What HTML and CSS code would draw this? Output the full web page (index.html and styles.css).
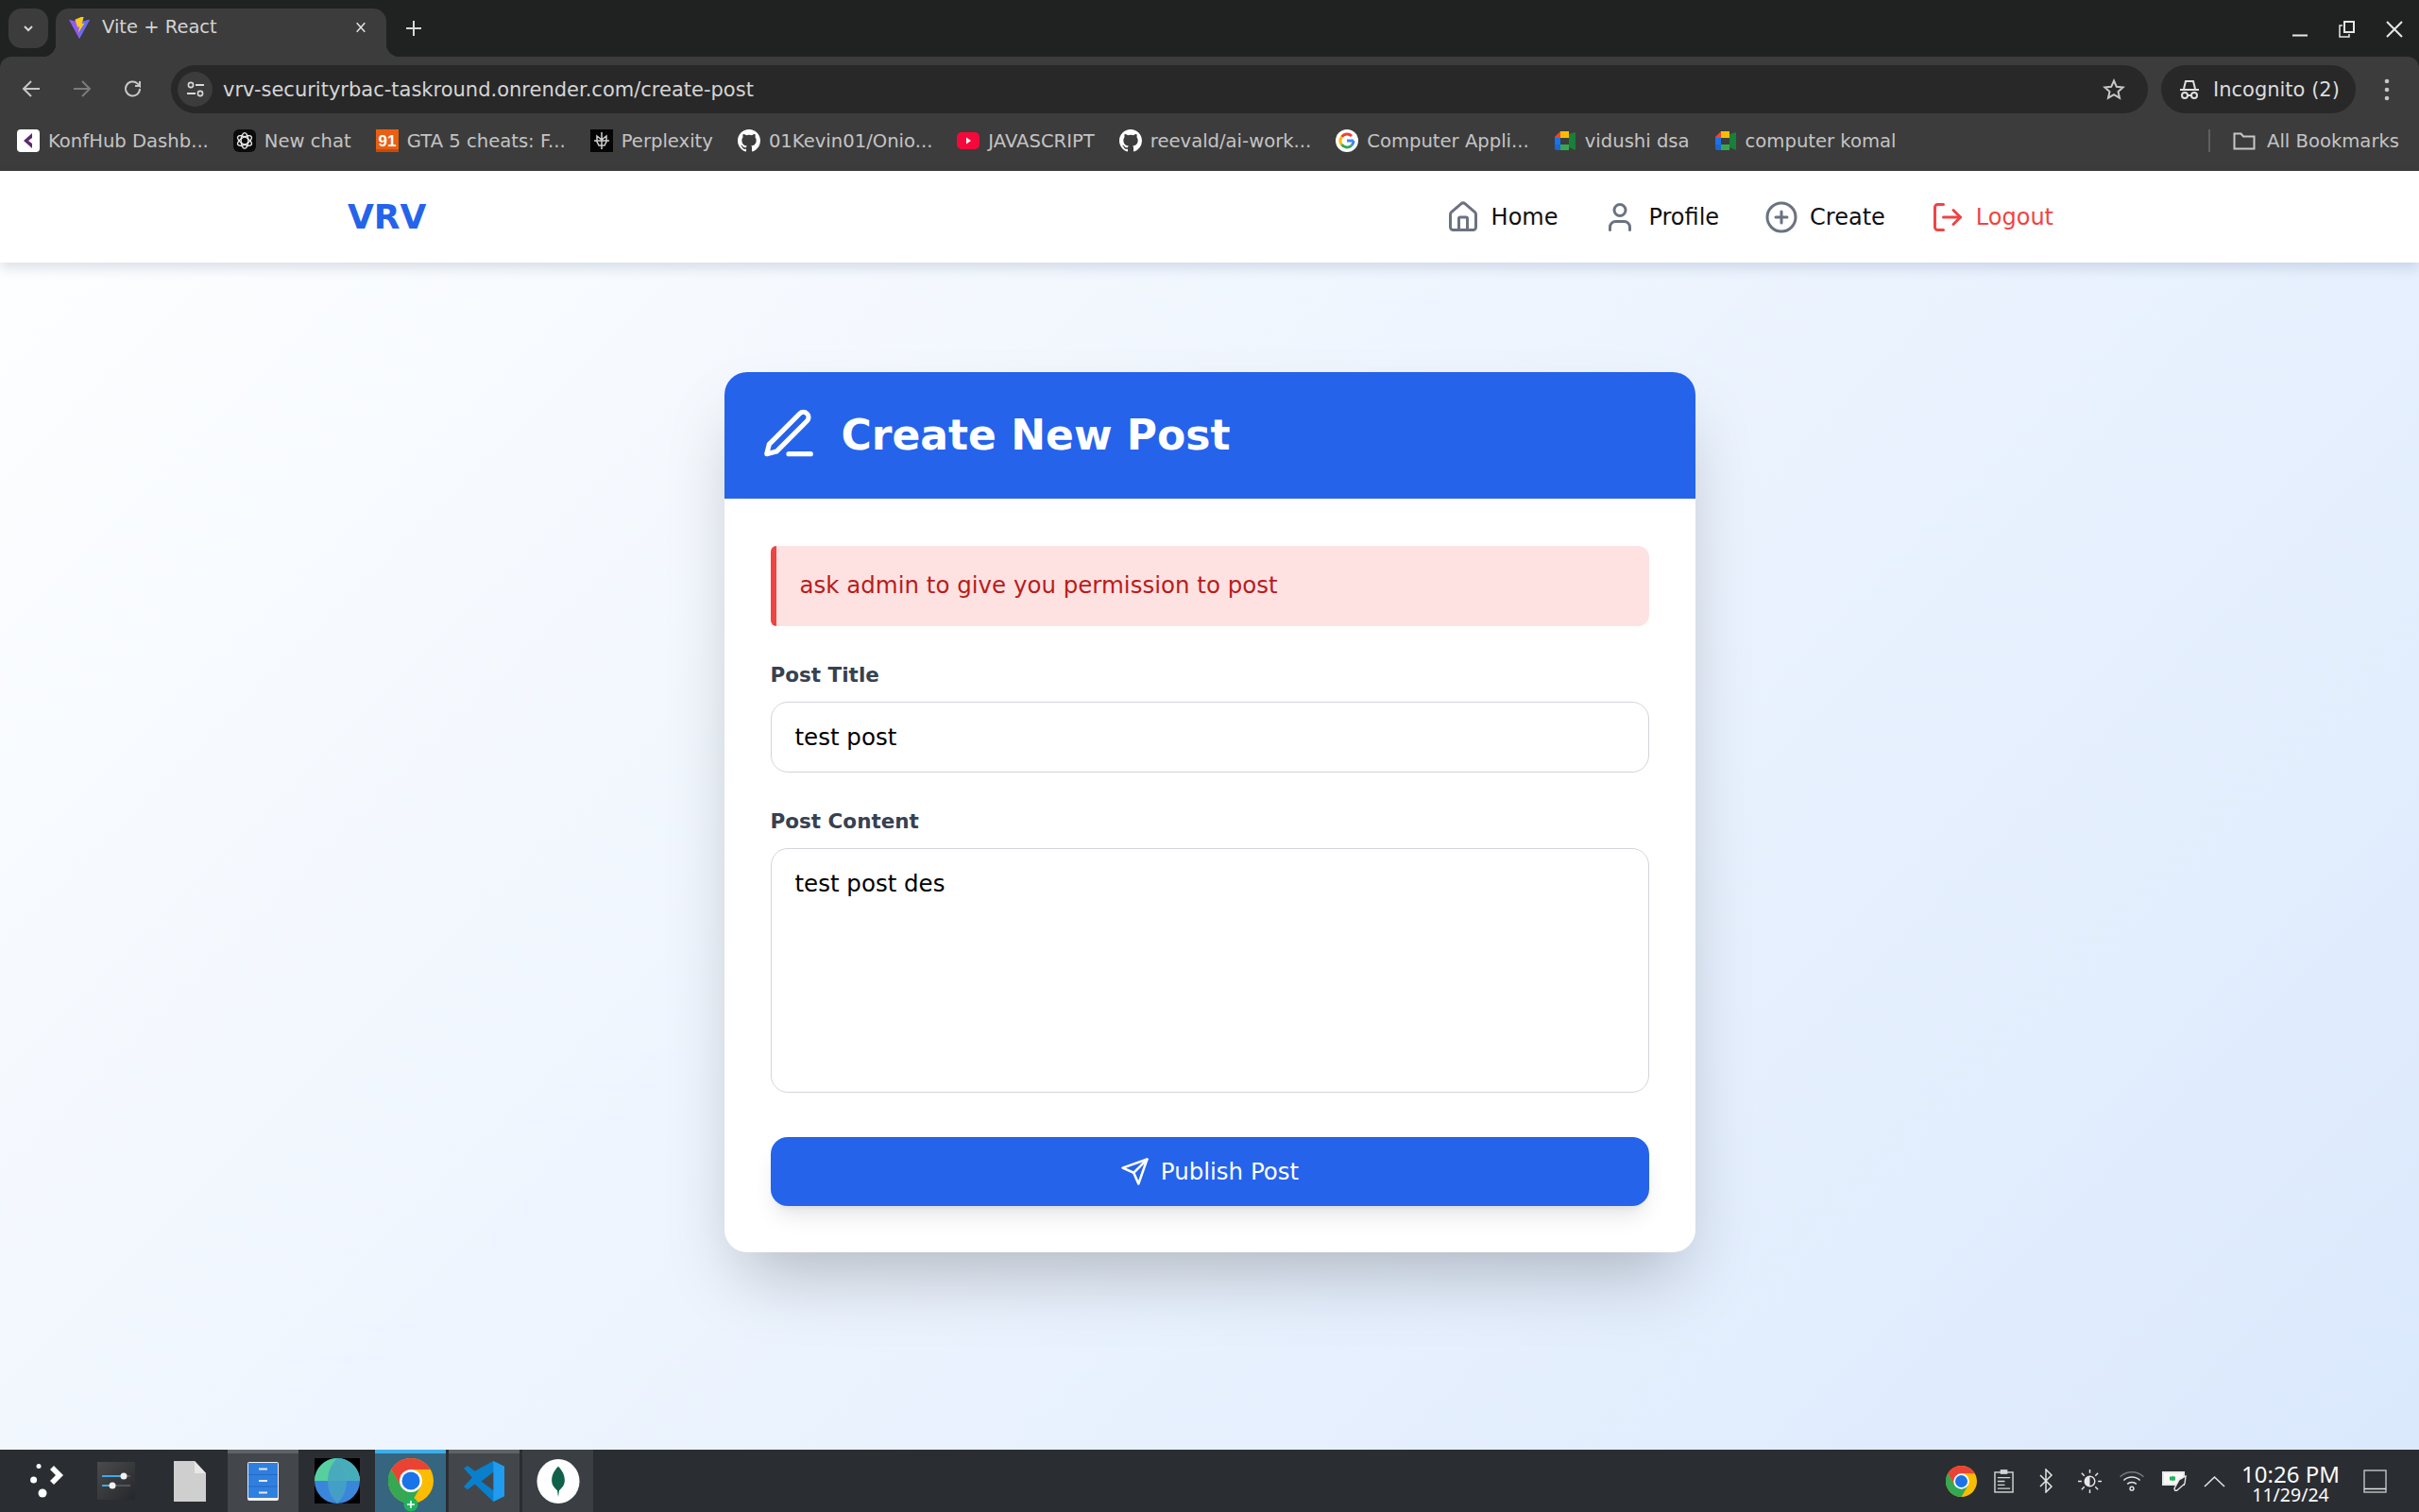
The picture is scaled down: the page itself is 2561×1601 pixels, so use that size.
FILE: index.html
```html
<!DOCTYPE html>
<html lang="en">
<head>
  <meta charset="UTF-8" />
  <title>Vite + React</title>
  <link rel="stylesheet" href="styles.css">
</head>
<body>
  <!-- browser chrome -->
  <div class="tabstrip">
    <div class="tab-search"><svg width="14" height="14" viewBox="0 0 14 14"><path d="M3 5l4 4 4-4" fill="none" stroke="#d5d7d8" stroke-width="2"/></svg></div>
    <div class="tab">
      <svg class="tab-favicon" width="24" height="24" viewBox="0 0 26 26">
        <path d="M1 4l12 3 12-3-12 22z" fill="#8f5cf6"/>
        <path d="M13 7l12-3-12 22z" fill="#6a6cf0"/>
        <path d="M15 1L8 4l3 9 2-1-1 7 7-11-3 1 2-8z" fill="#fdc91e"/>
      </svg>
      <span class="tab-title">Vite + React</span>
      <svg class="tab-close" width="12" height="12" viewBox="0 0 14 14"><path d="M2 1.5l10 11M12 1.5l-10 11" stroke="#e3e3e3" stroke-width="1.8"/></svg>
    </div>
    <svg class="new-tab" width="16" height="16" viewBox="0 0 16 16"><path d="M8 0v16M0 8h16" stroke="#d8d8d8" stroke-width="2"/></svg>
    <div class="win-controls">
      <svg width="18" height="18" viewBox="0 0 18 18"><path d="M1 15.5h16" stroke="#e6e6e6" stroke-width="2"/></svg>
      <svg width="18" height="18" viewBox="0 0 18 18"><path d="M4 5H1v12h10v-3" fill="none" stroke="#e6e6e6" stroke-width="1.5"/><rect x="6" y="1" width="10" height="11" fill="none" stroke="#e6e6e6" stroke-width="2"/></svg>
      <svg width="18" height="18" viewBox="0 0 18 18"><path d="M1 1l16 16M17 1L1 17" stroke="#e6e6e6" stroke-width="2"/></svg>
    </div>
  </div>

  <div class="toolbar">
    <svg class="tool-icon" width="20" height="20" viewBox="0 0 20 20"><path d="M19 10H2M10 2l-8 8 8 8" fill="none" stroke="#c7c7c7" stroke-width="2"/></svg>
    <svg class="tool-icon" width="20" height="20" viewBox="0 0 20 20"><path d="M1 10h17M10 2l8 8-8 8" fill="none" stroke="#7c7c7c" stroke-width="2"/></svg>
    <svg class="tool-icon" width="20" height="20" viewBox="0 0 20 20"><path d="M17 10a7.5 7.5 0 1 1-2.300-5.400L17 7V2M17 7h-5" fill="none" stroke="#c7c7c7" stroke-width="2"/></svg>
    <div class="omnibox">
      <div class="site-info">
        <svg width="22" height="22" viewBox="0 0 22 22"><circle cx="6" cy="6" r="2.6" fill="none" stroke="#d8d8d8" stroke-width="1.6"/><path d="M11 6h9M2 15h9" stroke="#d8d8d8" stroke-width="1.8"/><circle cx="16" cy="15" r="2.6" fill="none" stroke="#d8d8d8" stroke-width="1.6"/></svg>
      </div>
      <span class="url">vrv-securityrbac-taskround.onrender.com/create-post</span>
      <svg class="star" width="24" height="24" viewBox="0 0 24 24"><path d="M12 2.500l2.800 6.300 6.800.7-5.100 4.500 1.500 6.700L12 17.200l-6 3.500 1.500-6.700-5.100-4.500 6.800-.7z" fill="none" stroke="#c7c7c7" stroke-width="2"/></svg>
    </div>
    <div class="incognito">
      <svg width="24" height="24" viewBox="0 0 24 24"><path d="M2 12h20M6 11l2-8h8l2 8" fill="none" stroke="#e0e0e0" stroke-width="2"/><circle cx="7" cy="18" r="3" fill="none" stroke="#e0e0e0" stroke-width="2"/><circle cx="17" cy="18" r="3" fill="none" stroke="#e0e0e0" stroke-width="2"/><path d="M10 18h4" stroke="#e0e0e0" stroke-width="2"/></svg>
      <span>Incognito (2)</span>
    </div>
    <svg class="kebab" width="6" height="24" viewBox="0 0 6 24"><circle cx="3" cy="3" r="2.3" fill="#c7c7c7"/><circle cx="3" cy="12" r="2.3" fill="#c7c7c7"/><circle cx="3" cy="21" r="2.3" fill="#c7c7c7"/></svg>
  </div>

  <div class="bookmarks">
    <a class="bm">
      <svg width="24" height="24" viewBox="0 0 24 24"><rect width="24" height="24" rx="4" fill="#fff"/><path d="M16 4l-9 8 9 8v-5l-4-3 4-3z" fill="#5b2a6e"/></svg>
      <span>KonfHub Dashb...</span>
    </a>
    <a class="bm">
      <svg width="24" height="24" viewBox="0 0 24 24"><rect width="24" height="24" rx="6" fill="#0b0b0b"/><g fill="none" stroke="#ececec" stroke-width="1.3"><ellipse cx="12" cy="12" rx="3.800" ry="8.300"/><ellipse cx="12" cy="12" rx="3.800" ry="8.300" transform="rotate(60 12 12)"/><ellipse cx="12" cy="12" rx="3.800" ry="8.300" transform="rotate(120 12 12)"/></g></svg>
      <span>New chat</span>
    </a>
    <a class="bm">
      <svg width="24" height="24" viewBox="0 0 24 24"><rect width="24" height="24" fill="#ea5f12"/><rect y="21" width="24" height="3" fill="#c84b06"/><text class="fav-num" x="12" y="18" text-anchor="middle">91</text></svg>
      <span>GTA 5 cheats: F...</span>
    </a>
    <a class="bm">
      <svg width="24" height="24" viewBox="0 0 24 24"><rect width="24" height="24" fill="#050505"/><path d="M7 7l5 4 5-4v6l-2 4H9l-2-4zM12 3v18M4 12h16" fill="none" stroke="#cfcfcf" stroke-width="1.5"/></svg>
      <span>Perplexity</span>
    </a>
    <a class="bm">
      <svg class="gh" width="24" height="24" viewBox="0 0 16 16"><path fill="#fff" d="M8 0C3.580 0 0 3.580 0 8c0 3.540 2.290 6.530 5.470 7.590.4.070.55-.170.55-.380v-1.340c-2.230.490-2.690-1.070-2.690-1.070-.360-.930-.890-1.170-.890-1.170-.730-.500.060-.490.060-.490.800.060 1.230.820 1.230.820.710 1.220 1.870.870 2.330.660.070-.520.280-.870.500-1.070-1.780-.200-3.640-.890-3.640-3.950 0-.870.310-1.590.820-2.150-.080-.200-.360-1.020.080-2.120 0 0 .670-.210 2.200.820a7.700 7.700 0 0 1 4 0c1.530-1.040 2.200-.820 2.200-.820.440 1.100.160 1.920.080 2.120.510.560.820 1.270.820 2.150 0 3.070-1.870 3.750-3.650 3.950.290.250.540.730.540 1.480v2.190c0 .210.150.460.550.380A8 8 0 0 0 16 8c0-4.420-3.580-8-8-8z"/></svg>
      <span>01Kevin01/Onio...</span>
    </a>
    <a class="bm">
      <svg width="24" height="24" viewBox="0 0 24 24"><rect y="3" width="24" height="18" rx="5" fill="#f5093b"/><path d="M10 8.500l5 3.500-5 3.500z" fill="#fff"/></svg>
      <span>JAVASCRIPT</span>
    </a>
    <a class="bm">
      <svg class="gh" width="24" height="24" viewBox="0 0 16 16"><path fill="#fff" d="M8 0C3.580 0 0 3.580 0 8c0 3.540 2.290 6.530 5.470 7.590.4.070.55-.170.55-.380v-1.340c-2.230.490-2.690-1.070-2.690-1.070-.360-.930-.890-1.170-.890-1.170-.730-.500.060-.490.060-.490.800.060 1.230.820 1.230.820.710 1.220 1.870.870 2.330.660.070-.520.280-.870.500-1.070-1.780-.200-3.640-.890-3.640-3.950 0-.870.310-1.590.820-2.150-.080-.200-.360-1.020.080-2.120 0 0 .670-.210 2.200.820a7.700 7.700 0 0 1 4 0c1.530-1.040 2.200-.820 2.200-.820.440 1.100.160 1.920.080 2.120.510.560.820 1.270.820 2.150 0 3.070-1.870 3.750-3.650 3.950.290.250.540.730.540 1.480v2.190c0 .210.150.460.550.380A8 8 0 0 0 16 8c0-4.420-3.580-8-8-8z"/></svg>
      <span>reevald/ai-work...</span>
    </a>
    <a class="bm">
      <svg width="24" height="24" viewBox="0 0 24 24"><circle cx="12" cy="12" r="12" fill="#fff"/><path d="M19 12h-7" stroke="#4285f4" stroke-width="3"/><path d="M17 7a7 7 0 0 0-10.500.8" fill="none" stroke="#ea4335" stroke-width="3"/><path d="M6.500 7.800a7 7 0 0 0 0 8.400" fill="none" stroke="#fbbc05" stroke-width="3"/><path d="M6.500 16.200A7 7 0 0 0 17 17" fill="none" stroke="#34a853" stroke-width="3"/><path d="M17 17a7 7 0 0 0 2-5" fill="none" stroke="#4285f4" stroke-width="3"/></svg>
      <span>Computer Appli...</span>
    </a>
    <a class="bm">
      <svg width="24" height="24" viewBox="0 0 24 24"><path d="M7 2h9v7H7z" fill="#fbbc04"/><path d="M1 8l6-6v7H1z" fill="#ea4335"/><path d="M1 9h6v7H1z" fill="#1a73e8"/><path d="M1 16h6v6H3a2 2 0 0 1-2-2z" fill="#1967d2"/><path d="M7 16h9v6H7z" fill="#34a853"/><path d="M16 5v14l7 3V3z" fill="#188038"/></svg>
      <span>vidushi dsa</span>
    </a>
    <a class="bm">
      <svg width="24" height="24" viewBox="0 0 24 24"><path d="M7 2h9v7H7z" fill="#fbbc04"/><path d="M1 8l6-6v7H1z" fill="#ea4335"/><path d="M1 9h6v7H1z" fill="#1a73e8"/><path d="M1 16h6v6H3a2 2 0 0 1-2-2z" fill="#1967d2"/><path d="M7 16h9v6H7z" fill="#34a853"/><path d="M16 5v14l7 3V3z" fill="#188038"/></svg>
      <span>computer komal</span>
    </a>
    <div class="bm-all">
      <i class="bm-sep"></i>
      <svg width="24" height="24" viewBox="0 0 24 24"><path d="M1.500 4.500h7l2.500 3h11.500v13h-21z" fill="none" stroke="#c7c7c7" stroke-width="2"/></svg>
      <span>All Bookmarks</span>
    </div>
  </div>

  <!-- app -->
  <nav class="navbar">
    <a class="brand">VRV</a>
    <div class="nav-links">
      <a class="nav-link">
        <svg class="nav-icon" viewBox="0 0 24 24"><path d="M15 21v-8a1 1 0 0 0-1-1h-4a1 1 0 0 0-1 1v8"/><path d="M3 10a2 2 0 0 1 .709-1.528l7-5.999a2 2 0 0 1 2.582 0l7 5.999A2 2 0 0 1 21 10v9a2 2 0 0 1-2 2H5a2 2 0 0 1-2-2z"/></svg>
        <span>Home</span>
      </a>
      <a class="nav-link">
        <svg class="nav-icon" viewBox="0 0 24 24"><path d="M19 21v-2a4 4 0 0 0-4-4H9a4 4 0 0 0-4 4v2"/><circle cx="12" cy="7" r="4"/></svg>
        <span>Profile</span>
      </a>
      <a class="nav-link">
        <svg class="nav-icon" viewBox="0 0 24 24"><circle cx="12" cy="12" r="10"/><path d="M8 12h8"/><path d="M12 8v8"/></svg>
        <span>Create</span>
      </a>
      <a class="nav-link logout">
        <svg class="nav-icon" viewBox="0 0 24 24"><path d="M9 21H5a2 2 0 0 1-2-2V5a2 2 0 0 1 2-2h4"/><path d="m16 17 5-5-5-5"/><path d="M21 12H9"/></svg>
        <span>Logout</span>
      </a>
    </div>
  </nav>

  <main class="page">
    <section class="card">
      <header class="card-head">
        <svg class="head-icon" viewBox="0 0 24 24"><path d="M12 20h9"/><path d="M16.500 3.500a2.120 2.120 0 0 1 3 3L7 19l-4 1 1-4Z"/></svg>
        <h1>Create New Post</h1>
      </header>
      <form class="card-body">
        <div class="alert">ask admin to give you permission to post</div>
        <label class="field-label" for="title">Post Title</label>
        <input class="field" id="title" type="text" value="test post" />
        <label class="field-label" for="content">Post Content</label>
        <textarea class="field area" id="content">test post des</textarea>
        <button class="publish" type="button">
          <svg class="send-icon" viewBox="0 0 24 24"><path d="m22 2-7 20-4-9-9-4Z"/><path d="M22 2 11 13"/></svg>
          <span>Publish Post</span>
        </button>
      </form>
    </section>
  </main>

  <!-- desktop panel -->
  <div class="taskbar">
    <div class="task-left">
      <div class="task-item launcher">
        <svg width="36" height="36" viewBox="0 0 36 36"><circle cx="9" cy="2.500" r="2.500" fill="#fff"/><circle cx="3.600" cy="17" r="3.500" fill="#fff"/><circle cx="13" cy="31" r="4.500" fill="#fff"/><path d="M21 6l4-4 10 10-10 10-4-4 6-6z" fill="#fff"/></svg>
      </div>
      <div class="task-item">
        <svg width="40" height="40" viewBox="0 0 40 40"><defs><linearGradient id="settings-bg" x1="0" y1="0" x2="1" y2="1"><stop offset="0" stop-color="#4a4b4d"/><stop offset="1" stop-color="#25272a"/></linearGradient></defs><rect width="40" height="40" fill="url(#settings-bg)"/><path d="M5 15h23M5 25h11" stroke="#3fa9e8" stroke-width="2"/><path d="M28 15h7M16 25h19" stroke="#555" stroke-width="2"/><circle cx="28" cy="15" r="3.500" fill="#f2f2f2"/><circle cx="16" cy="25" r="3.500" fill="#f2f2f2"/></svg>
      </div>
      <div class="task-item">
        <svg width="34" height="43" viewBox="0 0 34 43"><path d="M0 0h22l12 13v30H0z" fill="#cfcfcf"/><path d="M22 0l12 13H22z" fill="#e8e8e8"/></svg>
      </div>
      <div class="task-item open">
        <svg width="33" height="41" viewBox="0 0 33 41"><rect width="33" height="41" rx="2" fill="#f0f0f0"/><rect x="1" y="1" width="31" height="37" fill="#2f7fe0"/><path d="M1 13.500h31M1 26h31" stroke="#2569c2"/><path d="M12 7.500h9M12 20h9M12 32.500h9" stroke="#e8e8e8" stroke-width="2"/></svg>
      </div>
      <div class="task-item">
        <svg width="48" height="48" viewBox="0 0 48 48"><rect width="48" height="48" fill="#000"/><circle cx="24" cy="24" r="24" fill="#3a86dc"/><path d="M24 0C11 0 0 11 0 24h48C48 11 37 0 24 0z" fill="#58cf9e"/><path d="M24 0c-7 7-10 15-10 24s3 17 10 24c7-7 10-15 10-24S31 7 24 0z" fill="#46a3c2" opacity=".85"/><path d="M34 24c0-9-3-17-10-24 13 0 24 11 24 24z" fill="#3f9fc8" opacity=".7"/></svg>
      </div>
      <div class="task-item active">
        <svg width="48" height="66" viewBox="0 0 48 66">
          <circle cx="24" cy="33" r="24" fill="#fbbc04"/>
          <path d="M3.200 21A24 24 0 0 1 44.800 21H24L13.600 39z" fill="#ea4335"/>
          <path d="M3.200 21A24 24 0 0 0 24 57L34.400 39H13.600z" fill="#34a853"/>
          <circle cx="24" cy="33" r="12" fill="#fff"/><circle cx="24" cy="33" r="9.500" fill="#1a73e8"/>
          <circle cx="24" cy="58" r="7.500" fill="#21b35c"/><path d="M24 54v8M20 58h8" stroke="#fff" stroke-width="1.6"/>
        </svg>
      </div>
      <div class="task-item open">
        <svg width="43" height="43" viewBox="0 0 44 44"><path d="M32 0l12 6v32l-12 6-20-19-8 6-4-3 9-10-9-10 4-3 8 6z" fill="#0a7fcb"/><path d="M32 0l12 6v32l-12 6z" fill="#1f9cf0"/><path d="M32 12L19 22l13 10z" fill="#43474c"/></svg>
      </div>
      <div class="task-item open dim">
        <svg width="48" height="47" viewBox="0 0 46 48"><ellipse cx="23" cy="24" rx="23" ry="24" fill="#fff"/><path d="M23 8c5 5 7 10 7 15 0 6-4 9-6 11l-1 7-1-7c-2-2-6-5-6-11 0-5 2-10 7-15z" fill="#116149"/></svg>
      </div>
    </div>
    <div class="tray">
      <svg width="33" height="33" viewBox="0 9 48 48">
        <circle cx="24" cy="33" r="24" fill="#fbbc04"/>
        <path d="M3.200 21A24 24 0 0 1 44.800 21H24L13.600 39z" fill="#ea4335"/>
        <path d="M3.200 21A24 24 0 0 0 24 57L34.400 39H13.600z" fill="#34a853"/>
        <circle cx="24" cy="33" r="12" fill="#fff"/><circle cx="24" cy="33" r="9.500" fill="#1a73e8"/>
      </svg>
      <svg width="21" height="25" viewBox="0 0 22 26"><rect x="1" y="3" width="20" height="22" fill="none" stroke="#d5d5d5" stroke-width="1.5"/><rect x="7" y="0" width="8" height="5" fill="#d5d5d5"/><path d="M4 9h14M4 13h8M4 17h8M4 21h14" stroke="#d5d5d5" stroke-width="1.4"/></svg>
      <svg width="32" height="26" viewBox="0 0 32 26"><path d="M10 7l12 12-6 6V1l6 6-12 12" fill="none" stroke="#e4e4e4" stroke-width="1.5"/></svg>
      <svg width="25" height="25" viewBox="0 0 26 26"><circle cx="13" cy="13" r="5.500" fill="none" stroke="#e8e8e8" stroke-width="1.5"/><path d="M13 7.500a5.500 5.500 0 0 1 0 11z" fill="#e8e8e8" transform="rotate(180 13 13)"/><path d="M13 0v4M13 22v4M0 13h4M22 13h4M4 4l3 3M19 19l3 3M22 4l-3 3M7 19l-3 3" stroke="#e8e8e8" stroke-width="1.5"/></svg>
      <svg width="28" height="23" viewBox="0 0 28 24"><path d="M1 7a19 19 0 0 1 26 0" fill="none" stroke="#77797c" stroke-width="1.5"/><path d="M5 11a13 13 0 0 1 18 0M9 15a7.500 7.500 0 0 1 10 0" fill="none" stroke="#e4e4e4" stroke-width="1.5"/><circle cx="14" cy="20" r="2" fill="none" stroke="#e4e4e4" stroke-width="1.5"/></svg>
      <svg width="26" height="22" viewBox="0 0 26 22"><rect x="0" y="1" width="24" height="15" fill="#e8e8e8"/><rect x="2" y="3" width="20" height="11" fill="#f8f8f8"/><path d="M8 8.500h6" stroke="#22b35c" stroke-width="4"/><path d="M8 8.500l4-3v6z" fill="#22b35c"/><path d="M16 21l-2 1-1-3 5-9 7-4-1 8z" fill="#2a2e32" stroke="#e8e8e8" stroke-width="1.4"/></svg>
      <svg width="23" height="13" viewBox="0 0 23 13"><path d="M1 12L11.500 2 22 12" fill="none" stroke="#e4e4e4" stroke-width="1.6"/></svg>
      <div class="clock">
        <span class="clock-time">10:26 PM</span>
        <span class="clock-date">11/29/24</span>
      </div>
      <svg class="show-desktop" width="25" height="25" viewBox="0 0 25 25"><rect x="1" y="1" width="23" height="23" fill="none" stroke="#b9bbbd" stroke-width="1.5"/><path d="M1 20.500h23" stroke="#e4e4e4" stroke-width="1.5"/></svg>
    </div>
  </div>
</body>
</html>
```

FILE: styles.css
```css
* {
  box-sizing: border-box;
}

html,
body {
  margin: 0;
  height: 1601px;
  overflow: hidden;
}

body {
  display: flex;
  flex-direction: column;
  font-family: "DejaVu Sans", sans-serif;
  background: #202221;
}

svg {
  flex: none;
  display: block;
}

/* browser chrome */
.tabstrip {
  height: 60px;
  flex: none;
  background: #202221;
  display: flex;
  align-items: flex-start;
  padding: 9px 0 0 9px;
}

.tab-search {
  width: 42px;
  height: 42px;
  border-radius: 14px;
  background: #3c3c3c;
  display: flex;
  align-items: center;
  justify-content: center;
}

.tab {
  position: relative;
  margin-left: 8px;
  width: 350px;
  height: 51px;
  background: #3c3c3c;
  border-radius: 14px 14px 0 0;
  display: flex;
  align-items: center;
  padding: 0 21px 12px 13px;
  color: #d4d4d4;
  font-size: 19.5px;
}

.tab::before,
.tab::after {
  content: "";
  position: absolute;
  bottom: 0;
  width: 14px;
  height: 14px;
}

.tab::before {
  right: 100%;
  background: radial-gradient(circle at 0 0, transparent 14px, #3c3c3c 14.5px);
}

.tab::after {
  left: 100%;
  background: radial-gradient(circle at 100% 0, transparent 14px, #3c3c3c 14.5px);
}

.tab-title {
  margin-left: 12px;
  flex: 1;
}

.new-tab {
  margin: 13px 0 0 21px;
}

.win-controls {
  margin-left: auto;
  display: flex;
  gap: 32px;
  padding: 13px 17px 0 0;
}

.toolbar {
  height: 60px;
  flex: none;
  background: #3c3c3c;
  display: flex;
  align-items: flex-start;
  padding: 9px 0 0 23px;
  border-radius: 12px 12px 0 0;
}

.tool-icon {
  margin: 15px 34px 0 0;
}

.tool-icon:nth-child(3) {
  margin-right: 30px;
}

.omnibox {
  width: 2093px;
  height: 51px;
  border-radius: 26px;
  background: #282828;
  display: flex;
  align-items: center;
  padding: 0 24px 0 7px;
}

.site-info {
  width: 37px;
  height: 37px;
  border-radius: 50%;
  background: #3c3c3c;
  display: flex;
  align-items: center;
  justify-content: center;
}

.url {
  margin-left: 11px;
  flex: 1;
  font-size: 21px;
  color: #d5d5d5;
}

.incognito {
  margin-left: 14px;
  width: 206px;
  height: 51px;
  border-radius: 26px;
  background: #282828;
  display: flex;
  align-items: center;
  gap: 13px;
  padding-left: 18px;
  font-size: 21px;
  color: #dcdcdc;
}

.kebab {
  margin: 14px 0 0 30px;
}

.bookmarks {
  height: 61px;
  flex: none;
  background: #3c3c3c;
  display: flex;
  align-items: center;
  padding: 0 21px 3px 18px;
  gap: 26px;
  font-size: 19.6px;
  color: #c4c4c4;
}

.bm {
  display: flex;
  align-items: center;
  gap: 9px;
}

.fav-num {
  font-family: "Liberation Sans", sans-serif;
  font-size: 17px;
  font-weight: 700;
  fill: #fff;
}

.bm-all {
  margin-left: auto;
  display: flex;
  align-items: center;
  gap: 12px;
}

.bm-sep {
  width: 2px;
  height: 24px;
  background: #5f5f5f;
  margin-right: 12px;
}

/* app navbar */
.navbar {
  height: 97px;
  flex: none;
  background: #fff;
  display: flex;
  align-items: center;
  justify-content: space-between;
  padding: 0 387px 0 368px;
  box-shadow: 0 6px 12px rgba(30, 50, 90, 0.14);
  position: relative;
  z-index: 1;
}

.brand {
  font-size: 36px;
  font-weight: 700;
  color: #2563eb;
}

.nav-links {
  display: flex;
  align-items: center;
  gap: 48px;
}

.nav-link {
  display: flex;
  align-items: center;
  gap: 12px;
  font-size: 24px;
  color: #111;
}

.nav-icon {
  width: 36px;
  height: 36px;
  fill: none;
  stroke: #6b7280;
  stroke-width: 2;
  stroke-linecap: round;
  stroke-linejoin: round;
}

.logout {
  color: #ef4444;
}

.logout .nav-icon {
  stroke: #ef4444;
}

/* create post */
.page {
  flex: 1;
  background: linear-gradient(135deg, #fdfeff 0%, #dbe9fd 100%);
  display: flex;
  justify-content: center;
  padding-top: 116px;
}

.card {
  width: 1028px;
  height: 932px;
  background: #fff;
  border-radius: 24px;
  box-shadow: 0 38px 76px -18px rgba(0, 0, 0, 0.25);
}

.card-head {
  height: 134px;
  background: #2563eb;
  border-radius: 24px 24px 0 0;
  display: flex;
  align-items: center;
  padding: 0 49px 2px 37px;
  gap: 25px;
}

.head-icon {
  width: 62px;
  height: 62px;
  fill: none;
  stroke: #fff;
  stroke-width: 2;
  stroke-linecap: round;
  stroke-linejoin: round;
}

.card-head h1 {
  margin: 0;
  color: #fff;
  font-size: 44px;
  font-weight: 700;
}

.card-body {
  display: flex;
  flex-direction: column;
  padding: 50px 49px 49px;
}

.alert {
  height: 85px;
  background: #fee2e2;
  border-left: 6px solid #ef4444;
  border-radius: 6px 12px 12px 6px;
  color: #b91c1c;
  font-size: 24.5px;
  display: flex;
  align-items: center;
  padding: 0 0 2px 25px;
}

.field-label {
  margin-top: 37px;
  margin-bottom: 13px;
  font-size: 21.5px;
  font-weight: 700;
  line-height: 30px;
  color: #374151;
}

.field {
  width: 100%;
  height: 75px;
  border: 1.5px solid #d1d5db;
  border-radius: 18px;
  padding: 0 25px;
  font-family: inherit;
  font-size: 24.5px;
  color: #000;
  background: #fff;
  outline: none;
}

.area {
  height: 259px;
  padding-top: 22px;
  resize: none;
  line-height: 29px;
}

.publish {
  margin-top: 47px;
  height: 73px;
  border: none;
  border-radius: 18px;
  background: #2563eb;
  color: #fff;
  font-family: inherit;
  font-size: 24.5px;
  display: flex;
  align-items: center;
  justify-content: center;
  gap: 12px;
  box-shadow: 0 15px 23px -5px rgba(0, 0, 0, 0.1), 0 6px 9px -6px rgba(0, 0, 0, 0.1);
}

.send-icon {
  width: 31px;
  height: 31px;
  fill: none;
  stroke: #fff;
  stroke-width: 2;
  stroke-linecap: round;
  stroke-linejoin: round;
}

/* desktop panel */
.taskbar {
  height: 66px;
  flex: none;
  background: #2a2e32;
  display: flex;
  align-items: center;
  justify-content: space-between;
  padding: 0 34px 0 7px;
}

.task-left {
  display: flex;
  gap: 3px;
  height: 100%;
}

.task-item {
  width: 75px;
  height: 100%;
  display: flex;
  align-items: center;
  justify-content: center;
}

.launcher svg {
  margin-left: 10px;
}

.task-item.open {
  background: #43474c;
  box-shadow: inset 0 4px 0 #5f6368;
}

.task-item.dim {
  background: #3b3f44;
  box-shadow: none;
}

.task-item.active {
  background: #35657f;
  box-shadow: inset 0 4px 0 #3daee9;
}

.tray {
  display: flex;
  align-items: center;
  gap: 18px;
}

.clock {
  width: 102px;
  padding-top: 5px;
  display: flex;
  flex-direction: column;
  align-items: center;
  color: #fcfcfc;
  font-family: "Noto Sans", sans-serif;
  white-space: nowrap;
}

.clock-time {
  font-size: 24px;
  line-height: 24px;
}

.clock-date {
  font-size: 19.5px;
  line-height: 20px;
}

.show-desktop {
  margin-left: 8px;
}
```
